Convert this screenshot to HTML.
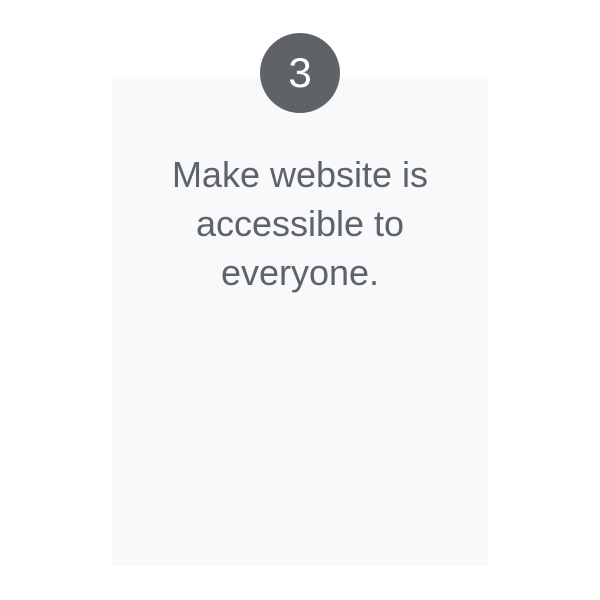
<!DOCTYPE html>
<html><head><style>
body{margin:0;width:600px;height:600px;background:#fff;position:relative;overflow:hidden;font-family:"Liberation Sans",Arial,sans-serif}
.card{position:absolute;left:112px;top:77px;width:376px;height:489px;background:#f8f9fa}
.circ{position:absolute;left:260px;top:33px;width:80px;height:80px;border-radius:50%;background:#5f6368;color:#fff;font-size:42px;line-height:80px;text-align:center}
.t{position:absolute;left:112px;width:376px;top:150px;text-align:center;font-size:36px;line-height:49px;color:#5f6368}
</style></head><body>
<div class="card"></div>
<div class="circ">3</div>
<div class="t">Make website is<br>accessible to<br>everyone.</div>
</body></html>
